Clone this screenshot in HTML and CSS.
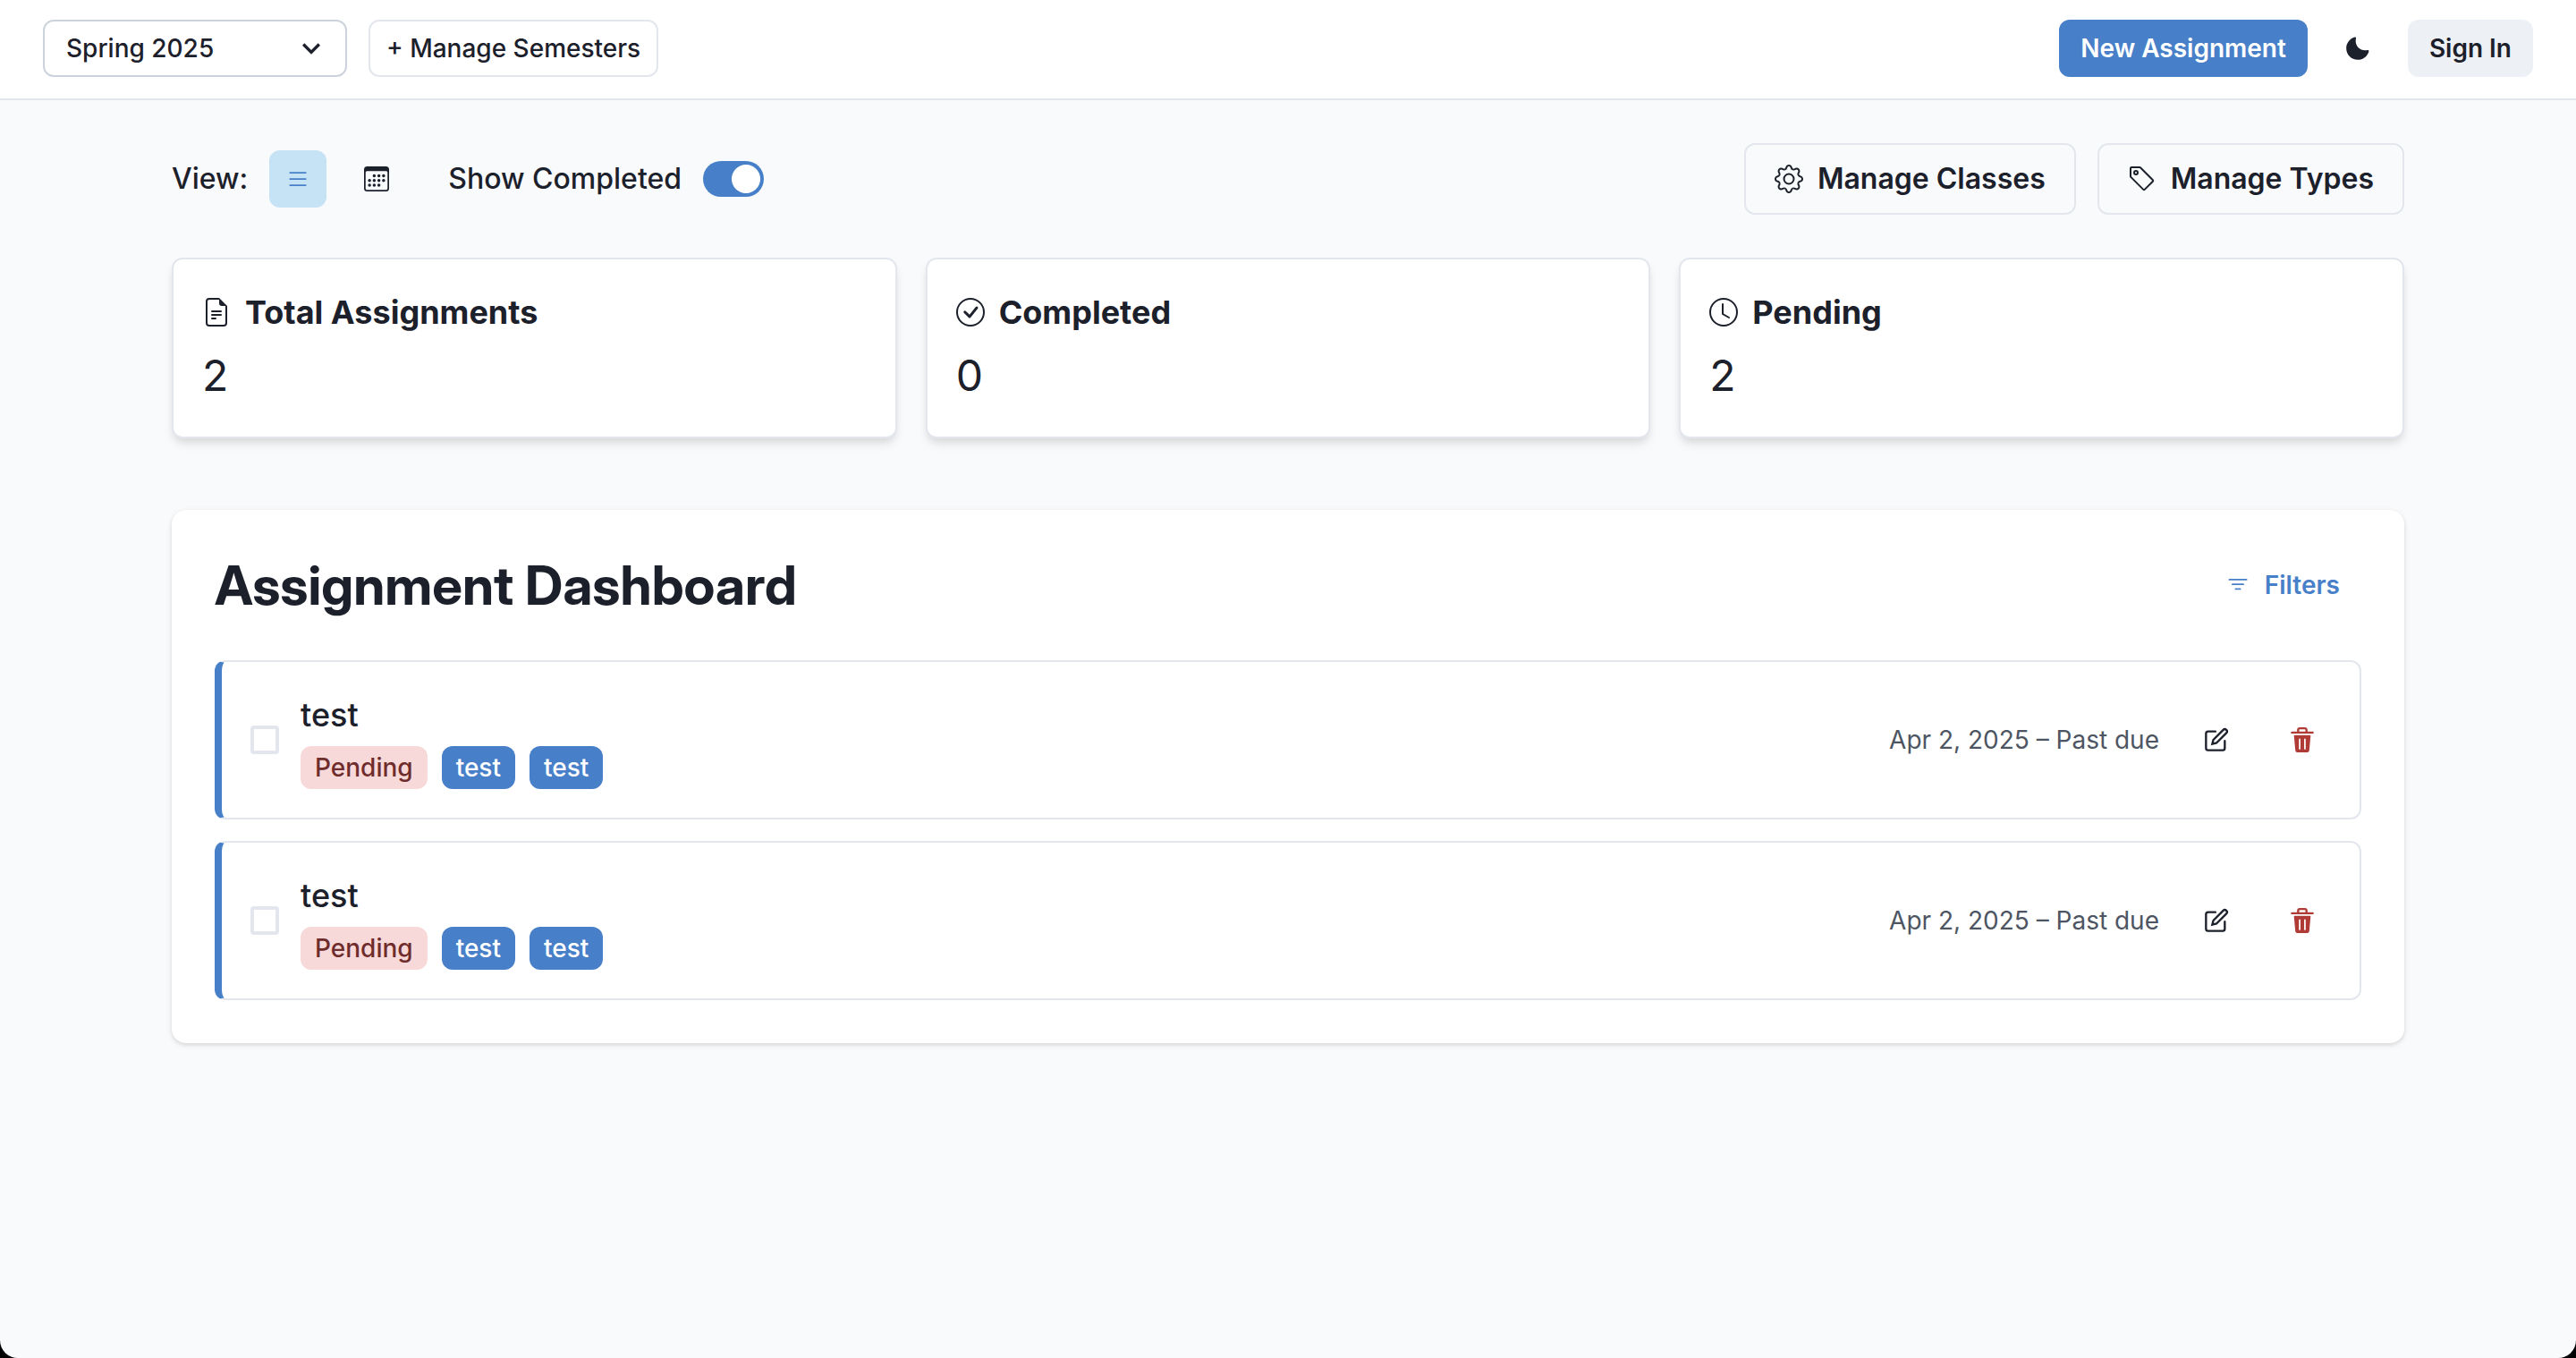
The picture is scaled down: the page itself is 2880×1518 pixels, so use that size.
FILE: index.html
```html
<!DOCTYPE html>
<html lang="en">
<head>
<meta charset="utf-8">
<title>Assignment Dashboard</title>
<link rel="stylesheet" href="styles.css">
</head>
<body>
<svg class="sprite" aria-hidden="true">
  <symbol id="chevron" viewBox="0 0 24 24"><path d="M16.59 8.59L12 13.17 7.41 8.59 6 10l6 6 6-6z"/></symbol>
  <symbol id="moon" viewBox="0 0 24 24"><path d="M21.4,13.7C20.6,13.9,19.8,14,19,14c-5,0-9-4-9-9c0-0.8,0.1-1.6,0.3-2.4c0.1-0.3,0-0.7-0.3-1c-0.3-0.3-0.6-0.4-1-0.3C4.3,2.7,1,7.1,1,12c0,6.1,4.9,11,11,11c4.9,0,9.3-3.3,10.6-8.1c0.1-0.3,0-0.7-0.3-1C22.1,13.7,21.7,13.6,21.4,13.7z"/></symbol>
  <symbol id="list" viewBox="0 0 16 16"><path d="M2.5 12a.5.5 0 0 1 .5-.5h10a.5.5 0 0 1 0 1H3a.5.5 0 0 1-.5-.5m0-4a.5.5 0 0 1 .5-.5h10a.5.5 0 0 1 0 1H3a.5.5 0 0 1-.5-.5m0-4a.5.5 0 0 1 .5-.5h10a.5.5 0 0 1 0 1H3a.5.5 0 0 1-.5-.5"/></symbol>
  <symbol id="calendar" viewBox="0 0 16 16"><path d="M14 0H2a2 2 0 0 0-2 2v12a2 2 0 0 0 2 2h12a2 2 0 0 0 2-2V2a2 2 0 0 0-2-2M1 3.857C1 3.384 1.448 3 2 3h12c.552 0 1 .384 1 .857v10.286c0 .473-.448.857-1 .857H2c-.552 0-1-.384-1-.857z"/><path d="M6.5 7a1 1 0 1 0 0-2 1 1 0 0 0 0 2m3 0a1 1 0 1 0 0-2 1 1 0 0 0 0 2m3 0a1 1 0 1 0 0-2 1 1 0 0 0 0 2m-9 3a1 1 0 1 0 0-2 1 1 0 0 0 0 2m3 0a1 1 0 1 0 0-2 1 1 0 0 0 0 2m3 0a1 1 0 1 0 0-2 1 1 0 0 0 0 2m3 0a1 1 0 1 0 0-2 1 1 0 0 0 0 2m-9 3a1 1 0 1 0 0-2 1 1 0 0 0 0 2m3 0a1 1 0 1 0 0-2 1 1 0 0 0 0 2m3 0a1 1 0 1 0 0-2 1 1 0 0 0 0 2"/></symbol>
  <symbol id="gear" viewBox="0 0 16 16"><path d="M8 4.754a3.246 3.246 0 1 0 0 6.492 3.246 3.246 0 0 0 0-6.492M5.754 8a2.246 2.246 0 1 1 4.492 0 2.246 2.246 0 0 1-4.492 0"/><path d="M9.796 1.343c-.527-1.79-3.065-1.79-3.592 0l-.094.319a.873.873 0 0 1-1.255.52l-.292-.16c-1.64-.892-3.433.902-2.54 2.541l.159.292a.873.873 0 0 1-.52 1.255l-.319.094c-1.79.527-1.79 3.065 0 3.592l.319.094a.873.873 0 0 1 .52 1.255l-.16.292c-.892 1.64.901 3.434 2.541 2.54l.292-.159a.873.873 0 0 1 1.255.52l.094.319c.527 1.79 3.065 1.79 3.592 0l.094-.319a.873.873 0 0 1 1.255-.52l.292.16c1.64.893 3.434-.902 2.54-2.541l-.159-.292a.873.873 0 0 1 .52-1.255l.319-.094c1.79-.527 1.79-3.065 0-3.592l-.319-.094a.873.873 0 0 1-.52-1.255l.16-.292c.893-1.64-.902-3.433-2.541-2.54l-.292.159a.873.873 0 0 1-1.255-.52zm-2.633.283c.246-.835 1.428-.835 1.674 0l.094.319a1.873 1.873 0 0 0 2.693 1.115l.291-.16c.764-.415 1.6.42 1.184 1.185l-.159.292a1.873 1.873 0 0 0 1.116 2.692l.318.094c.835.246.835 1.428 0 1.674l-.319.094a1.873 1.873 0 0 0-1.115 2.693l.16.291c.415.764-.42 1.6-1.185 1.184l-.291-.159a1.873 1.873 0 0 0-2.693 1.116l-.094.318c-.246.835-1.428.835-1.674 0l-.094-.319a1.873 1.873 0 0 0-2.692-1.115l-.292.16c-.764.415-1.6-.42-1.184-1.185l.159-.291A1.873 1.873 0 0 0 1.945 8.93l-.319-.094c-.835-.246-.835-1.428 0-1.674l.319-.094A1.873 1.873 0 0 0 3.06 4.377l-.16-.292c-.415-.764.42-1.6 1.185-1.184l.292.159a1.873 1.873 0 0 0 2.692-1.115z"/></symbol>
  <symbol id="tag" viewBox="0 0 16 16"><path d="M6 4.5a1.5 1.5 0 1 1-3 0 1.5 1.5 0 0 1 3 0m-1 0a.5.5 0 1 0-1 0 .5.5 0 0 0 1 0"/><path d="M2 1h4.586a1 1 0 0 1 .707.293l7 7a1 1 0 0 1 0 1.414l-4.586 4.586a1 1 0 0 1-1.414 0l-7-7A1 1 0 0 1 1 6.586V2a1 1 0 0 1 1-1m0 5.586 7 7L13.586 9l-7-7H2z"/></symbol>
  <symbol id="file" viewBox="0 0 16 16"><path d="M5.5 7a.5.5 0 0 0 0 1h5a.5.5 0 0 0 0-1zM5 9.5a.5.5 0 0 1 .5-.5h5a.5.5 0 0 1 0 1h-5a.5.5 0 0 1-.5-.5m0 2a.5.5 0 0 1 .5-.5h2a.5.5 0 0 1 0 1h-2a.5.5 0 0 1-.5-.5"/><path d="M9.5 0H4a2 2 0 0 0-2 2v12a2 2 0 0 0 2 2h8a2 2 0 0 0 2-2V4.5zm0 1v2A1.5 1.5 0 0 0 11 4.5h2V14a1 1 0 0 1-1 1H4a1 1 0 0 1-1-1V2a1 1 0 0 1 1-1z"/></symbol>
  <symbol id="check" viewBox="0 0 16 16"><path d="M8 15A7 7 0 1 1 8 1a7 7 0 0 1 0 14m0 1A8 8 0 1 0 8 0a8 8 0 0 0 0 16"/><path d="m10.97 4.97-.02.022-3.473 4.425-2.093-2.094a.75.75 0 0 0-1.06 1.06L6.97 11.03a.75.75 0 0 0 1.079-.02l3.992-4.99a.75.75 0 0 0-1.071-1.05"/></symbol>
  <symbol id="clock" viewBox="0 0 16 16"><path d="M8 3.5a.5.5 0 0 0-1 0V9a.5.5 0 0 0 .252.434l3.5 2a.5.5 0 0 0 .496-.868L8 8.71z"/><path d="M8 16A8 8 0 1 0 8 0a8 8 0 0 0 0 16m7-8A7 7 0 1 1 1 8a7 7 0 0 1 14 0"/></symbol>
  <symbol id="filter" viewBox="0 0 16 16"><path d="M6 10.5a.5.5 0 0 1 .5-.5h3a.5.5 0 0 1 0 1h-3a.5.5 0 0 1-.5-.5m-2-3a.5.5 0 0 1 .5-.5h7a.5.5 0 0 1 0 1h-7a.5.5 0 0 1-.5-.5m-2-3a.5.5 0 0 1 .5-.5h11a.5.5 0 0 1 0 1h-11a.5.5 0 0 1-.5-.5"/></symbol>
  <symbol id="edit" viewBox="0 0 24 24"><g fill="none" stroke="currentColor" stroke-linecap="round" stroke-width="2"><path d="M11 4H4a2 2 0 0 0-2 2v14a2 2 0 0 0 2 2h14a2 2 0 0 0 2-2v-7"/><path d="M18.5 2.5a2.121 2.121 0 0 1 3 3L12 15l-4 1 1-4 9.5-9.5z"/></g></symbol>
  <symbol id="trash" viewBox="0 0 24 24"><path d="M19.452 7.5H4.547a.5.5 0 0 0-.5.545l1.287 14.136A2 2 0 0 0 7.326 24h9.347a2 2 0 0 0 1.992-1.819L19.95 8.045a.5.5 0 0 0-.129-.382.5.5 0 0 0-.369-.163zm-9.2 13a.75.75 0 0 1-1.5 0v-9a.75.75 0 0 1 1.5 0zm5 0a.75.75 0 0 1-1.5 0v-9a.75.75 0 0 1 1.5 0zM22 4h-4.75a.25.25 0 0 1-.25-.25V2.5A2.5 2.5 0 0 0 14.5 0h-5A2.5 2.5 0 0 0 7 2.5v1.25a.25.25 0 0 1-.25.25H2a1 1 0 0 0 0 2h20a1 1 0 0 0 0-2zM9 3.75V2.5a.5.5 0 0 1 .5-.5h5a.5.5 0 0 1 .5.5v1.25a.25.25 0 0 1-.25.25h-5.5A.25.25 0 0 1 9 3.75z"/></symbol>
</svg>

<header class="topbar">
  <div class="group">
    <div class="select-wrap">
      <select class="select" aria-label="Semester"><option>Spring 2025</option></select>
      <svg class="select-icon" aria-hidden="true"><use href="#chevron"/></svg>
    </div>
    <button class="btn btn-semesters" type="button">+ Manage Semesters</button>
  </div>
  <div class="group">
    <button class="btn btn-primary" type="button">New Assignment</button>
    <button class="btn btn-icon" type="button" aria-label="Toggle dark mode"><svg class="icon" aria-hidden="true"><use href="#moon"/></svg></button>
    <button class="btn btn-muted" type="button">Sign In</button>
  </div>
</header>

<main class="container">
  <div class="toolbar">
    <div class="toolbar-left">
      <div class="group">
        <span class="label">View:</span>
        <button class="btn btn-icon btn-active" type="button" aria-label="List view"><svg class="icon" aria-hidden="true"><use href="#list"/></svg></button>
        <button class="btn btn-icon" type="button" aria-label="Calendar view"><svg class="icon" aria-hidden="true"><use href="#calendar"/></svg></button>
      </div>
      <div class="group">
        <label class="label" for="show-completed">Show Completed</label>
        <input class="switch" type="checkbox" role="switch" id="show-completed" checked>
      </div>
    </div>
    <div class="group">
      <button class="btn btn-large" type="button"><svg class="icon icon-md" aria-hidden="true"><use href="#gear"/></svg>Manage Classes</button>
      <button class="btn btn-large" type="button"><svg class="icon icon-md" aria-hidden="true"><use href="#tag"/></svg>Manage Types</button>
    </div>
  </div>

  <section class="stats" aria-label="Summary">
    <article class="stat">
      <h2 class="stat-title"><svg class="icon icon-md" aria-hidden="true"><use href="#file"/></svg>Total Assignments</h2>
      <p class="stat-value">2</p>
    </article>
    <article class="stat">
      <h2 class="stat-title"><svg class="icon icon-md" aria-hidden="true"><use href="#check"/></svg>Completed</h2>
      <p class="stat-value">0</p>
    </article>
    <article class="stat">
      <h2 class="stat-title"><svg class="icon icon-md" aria-hidden="true"><use href="#clock"/></svg>Pending</h2>
      <p class="stat-value">2</p>
    </article>
  </section>

  <section class="dashboard">
    <div class="dashboard-head">
      <h1 class="dashboard-title">Assignment Dashboard</h1>
      <button class="btn btn-filters" type="button"><svg class="icon" aria-hidden="true"><use href="#filter"/></svg>Filters</button>
    </div>
    <ul class="list">
      <li class="item">
        <input class="check" type="checkbox" id="done-1" aria-label="Mark test complete">
        <div class="item-body">
          <label class="item-name" for="done-1">test</label>
          <div class="tags"><span class="tag tag-pending">Pending</span><span class="tag">test</span><span class="tag">test</span></div>
        </div>
        <div class="item-side">
          <span class="date">Apr 2, 2025 – Past due</span>
          <button class="btn btn-icon" type="button" aria-label="Edit"><svg class="icon" aria-hidden="true"><use href="#edit"/></svg></button>
          <button class="btn btn-icon btn-danger" type="button" aria-label="Delete"><svg class="icon" aria-hidden="true"><use href="#trash"/></svg></button>
        </div>
      </li>
      <li class="item">
        <input class="check" type="checkbox" id="done-2" aria-label="Mark test complete">
        <div class="item-body">
          <label class="item-name" for="done-2">test</label>
          <div class="tags"><span class="tag tag-pending">Pending</span><span class="tag">test</span><span class="tag">test</span></div>
        </div>
        <div class="item-side">
          <span class="date">Apr 2, 2025 – Past due</span>
          <button class="btn btn-icon" type="button" aria-label="Edit"><svg class="icon" aria-hidden="true"><use href="#edit"/></svg></button>
          <button class="btn btn-icon btn-danger" type="button" aria-label="Delete"><svg class="icon" aria-hidden="true"><use href="#trash"/></svg></button>
        </div>
      </li>
    </ul>
  </section>
</main>
</body>
</html>
```
FILE: styles.css
```css
:root {
  --ink: #1c202b;
  --muted: #4d5563;
  --line: #e3e7ed;
  --blue: #4780c8;
  --page: #f8fafc;
}

*,
*::before,
*::after {
  box-sizing: border-box;
}

html {
  background: #000;
}

body {
  margin: 0;
  min-height: 100vh;
  background: var(--page);
  border-radius: 0 0 20px 20px;
  color: var(--ink);
  font-family: Inter, "Liberation Sans", sans-serif;
  font-size: 32px;
  line-height: 48px;
}

h1,
h2,
p,
ul {
  margin: 0;
  padding: 0;
}

.sprite {
  display: none;
}

.icon {
  flex: none;
  width: 28px;
  height: 28px;
  fill: currentColor;
}

.icon-md {
  width: 32px;
  height: 32px;
}

.group {
  display: flex;
  align-items: center;
  gap: 24px;
}

/* Buttons */
.btn {
  display: inline-flex;
  align-items: center;
  justify-content: center;
  gap: 16px;
  height: 64px;
  padding: 0 24px;
  border: 0;
  border-radius: 12px;
  background: transparent;
  color: inherit;
  font: inherit;
  font-size: 28px;
  font-weight: 600;
  white-space: nowrap;
}

.btn-semesters {
  padding: 0 18px;
  border: 2px solid var(--line);
  font-weight: 500;
}

.btn-primary {
  background: var(--blue);
  color: #fff;
}

.btn-muted {
  background: #edf1f6;
}

.btn-icon {
  width: 64px;
  padding: 0;
}

.btn-active {
  background: #c6e2f5;
  color: var(--blue);
}

.btn-large {
  height: 80px;
  padding: 0 32px;
  border: 2px solid var(--line);
  font-size: 32px;
}

.btn-filters {
  color: var(--blue);
}

.btn-danger {
  color: #b03b36;
}

/* Top bar */
.topbar {
  display: flex;
  align-items: center;
  justify-content: space-between;
  padding: 22px 48px 24px;
  border-bottom: 2px solid var(--line);
  background: #fff;
}

.select-wrap {
  position: relative;
  width: 340px;
}

.select {
  display: block;
  appearance: none;
  width: 100%;
  height: 64px;
  padding: 0 64px 0 24px;
  border: 2px solid #ccd3dc;
  border-radius: 12px;
  background: #fff;
  color: inherit;
  font: inherit;
  font-size: 28px;
  font-weight: 500;
}

.select-icon {
  position: absolute;
  top: 12px;
  right: 20px;
  width: 40px;
  height: 40px;
  fill: currentColor;
  pointer-events: none;
}

/* Page body */
.container {
  max-width: 2560px;
  margin: 0 auto;
  padding: 48px 32px;
}

.toolbar {
  display: flex;
  align-items: center;
  justify-content: space-between;
  margin-bottom: 48px;
}

.toolbar-left {
  display: flex;
  align-items: center;
  gap: 48px;
}

.label {
  font-weight: 500;
}

.switch {
  appearance: none;
  display: flex;
  justify-content: flex-end;
  width: 68px;
  height: 40px;
  margin: 0;
  padding: 4px;
  border-radius: 20px;
  background: var(--blue);
}

.switch::before {
  content: "";
  width: 32px;
  height: 32px;
  border-radius: 50%;
  background: #fff;
}

.switch:not(:checked) {
  justify-content: flex-start;
  background: #cbd5e0;
}

/* Summary cards */
.stats {
  display: grid;
  grid-template-columns: repeat(3, 1fr);
  gap: 32px;
  margin-bottom: 80px;
}

.stat {
  padding: 32px;
  border: 2px solid var(--line);
  border-radius: 12px;
  background: #fff;
  box-shadow: 0 8px 12px -2px rgba(0, 0, 0, 0.1), 0 4px 8px -2px rgba(0, 0, 0, 0.06);
}

.stat-title {
  display: flex;
  align-items: center;
  gap: 16px;
  margin-bottom: 8px;
  font-size: 36px;
  font-weight: 700;
  line-height: 54px;
}

.stat-value {
  font-size: 48px;
  line-height: 72px;
}

/* Assignment list */
.dashboard {
  padding: 48px;
  border-radius: 16px;
  background: #fff;
  box-shadow: 0 2px 6px rgba(0, 0, 0, 0.1), 0 2px 4px rgba(0, 0, 0, 0.06);
}

.dashboard-head {
  display: flex;
  align-items: center;
  justify-content: space-between;
  margin-bottom: 48px;
}

.dashboard-title {
  font-family: "Inter Display", Inter, "Liberation Sans", sans-serif;
  font-size: 60px;
  font-weight: 700;
  line-height: 72px;
}

.list {
  display: grid;
  gap: 24px;
  list-style: none;
}

.item {
  display: flex;
  align-items: center;
  gap: 24px;
  padding: 32px;
  border: 2px solid var(--line);
  border-left: 8px solid var(--blue);
  border-radius: 12px;
}

.check {
  appearance: none;
  flex: none;
  width: 32px;
  height: 32px;
  margin: 0;
  border: 4px solid var(--line);
  border-radius: 4px;
}

.check:checked {
  border-color: var(--blue);
  background: var(--blue);
}

.item-body {
  display: grid;
  flex: 1;
  gap: 8px;
}

.item-name {
  font-size: 36px;
  font-weight: 500;
  line-height: 54px;
}

.tags {
  display: flex;
  gap: 16px;
}

.tag {
  padding: 0 16px;
  border-radius: 12px;
  background: var(--blue);
  color: #fff;
  font-size: 28px;
  font-weight: 500;
}

.tag-pending {
  background: #f8d9d9;
  color: #6f2c2c;
}

.item-side {
  display: flex;
  align-items: center;
  gap: 32px;
}

.date {
  color: var(--muted);
  font-size: 28px;
}
```
